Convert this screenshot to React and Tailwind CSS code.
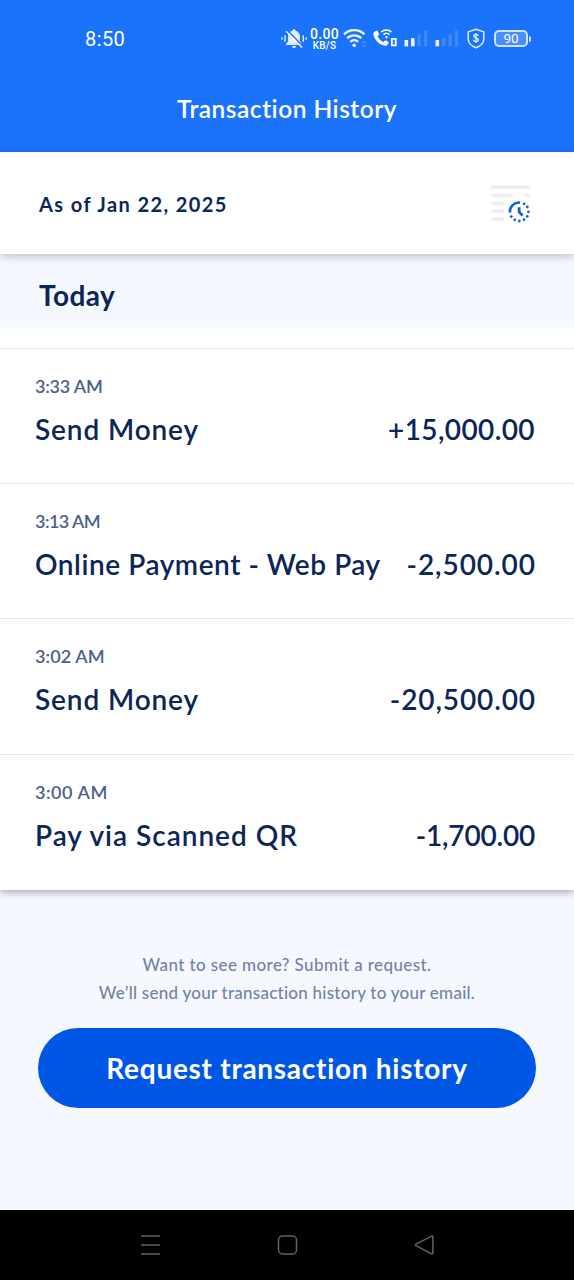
import React from "react";

const transactions = [
  { time: "3:33 AM", name: "Send Money", amount: "+15,000.00", nameTrack: "tracking-[0.880px]", amountTrack: "tracking-[0.400px]", timeTrack: "tracking-[-0.200px]" },
  { time: "3:13 AM", name: "Online Payment - Web Pay", amount: "-2,500.00", nameTrack: "tracking-[0.560px]", amountTrack: "tracking-[0.950px] -mr-px", timeTrack: "tracking-[-0.550px]" },
  { time: "3:02 AM", name: "Send Money", amount: "-20,500.00", nameTrack: "tracking-[0.880px]", amountTrack: "tracking-[0.900px] -mr-px", timeTrack: "tracking-[0.100px]" },
  { time: "3:00 AM", name: "Pay via Scanned QR", amount: "-1,700.00", nameTrack: "tracking-[0.980px]", amountTrack: "tracking-[-0.200px]", timeTrack: "tracking-[0.550px]" },
];

function BellOff() {
  return (
    <svg className="h-6 w-[27px] shrink-0" viewBox="0 0 27 24" fill="none">
      <path d="M14 2.200c-1 0-1.600.6-1.600 1.500C9.500 4.500 8.100 6.700 8.100 9.500v4.700L6.100 17v1h15.800v-1l-2-2.800V9.500c0-2.800-1.400-5-4.300-5.800 0-.9-.6-1.500-1.600-1.500zM12 19h4c0 1.200-.8 2-2 2s-2-.8-2-2z" fill="#fff" fillOpacity=".88" />
      <path d="M7.500 3.500l15.500 16" stroke="#1b73fc" strokeWidth="1.700" />
      <path d="M6.100 4.200l16 16.300" stroke="#fff" strokeOpacity=".9" strokeWidth="1.600" />
      <path d="M2 10.200v2.600M5 8.200v6.500M23.300 8.200v6.500M26.200 10.200v2.600" stroke="#fff" strokeOpacity=".88" strokeWidth="1.400" />
    </svg>
  );
}

function Wifi() {
  return (
    <svg className="ml-1 h-6 w-[24px] shrink-0" viewBox="0 0 24 24" fill="none">
      <g stroke="#fff" strokeOpacity=".92" strokeWidth="2.300">
        <path d="M1 7.300c5.800-5.500 14.700-5.500 20.500 0" />
        <path d="M4.200 11.200c4-3.800 10.100-3.800 14.100 0" />
        <path d="M7.400 14.800c2.200-2.100 5.500-2.100 7.700 0" />
      </g>
      <circle cx="11.200" cy="18.300" r="1.800" fill="#fff" fillOpacity=".95" />
      <path d="M19 15.300h4M19 18.700h4" stroke="#fff" strokeOpacity=".2" strokeWidth="1.500" />
    </svg>
  );
}

function WifiCall() {
  return (
    <svg className="ml-[6px] h-6 w-[25px] shrink-0" viewBox="0 0 25 24" fill="none">
      <path d="M1.200 5l2-1.300c.6-.3 1.200-.1 1.500.5L6 6.500c.3.600.1 1.100-.3 1.500L4.500 9c1 2.600 3.200 4.700 5.900 6l1.500-1.300c.5-.4 1-.4 1.500-.1l1.800 1.300c.6.400.6 1 .2 1.500l-1.200 1.600c-.7.900-1.600 1-2.800.7C6.200 17.700 1.400 13 .4 7.300c-.2-1 .1-1.800.8-2.300z" fill="#fff" />
      <path d="M8.300 5c2.900-2.800 7.200-2.800 10.100 0M10.500 7.600c1.800-1.700 4.100-1.700 5.900 0" stroke="#fff" strokeWidth="1.500" />
      <circle cx="13.500" cy="10" r="1.200" fill="#fff" />
      <rect x="18.800" y="11.900" width="4" height="6.500" stroke="#fff" strokeWidth="1.700" />
      <path d="M20.800 13.800v2.600" stroke="#fff" strokeOpacity=".5" strokeWidth=".8" />
    </svg>
  );
}

function Signal({ level }) {
  const on = (n) => (n <= level ? 0.92 : 0.16);
  return (
    <svg className="ml-[6px] h-6 w-[25px] shrink-0" viewBox="0 0 25 24" fill="#fff">
      <rect x="0.500" y="13" width="3.600" height="6.300" fillOpacity={on(1)} />
      <rect x="7" y="11" width="3.600" height="8.300" fillOpacity={on(2)} />
      <rect x="13.500" y="7.500" width="3.300" height="11.800" fillOpacity={on(3)} />
      <rect x="20" y="3.500" width="3.300" height="15.800" fillOpacity={on(4)} />
    </svg>
  );
}

function Shield() {
  return (
    <svg className="ml-[7px] h-6 w-[18px] shrink-0" viewBox="0 0 18 24" fill="none" stroke="#fff" strokeOpacity=".85">
      <path d="M9 2.200l7.800 2.700v7.400c0 3.900-3.400 6.700-7.800 8.500-4.400-1.800-7.800-4.600-7.800-8.500V4.900z" strokeWidth="1.500" strokeLinejoin="round" />
      <path d="M11.300 9c-.2-1-1-1.600-2.300-1.600s-2.300.7-2.300 1.700c0 2.500 4.700 1.200 4.700 3.700 0 1.100-1 1.800-2.400 1.800s-2.400-.7-2.500-1.800M9 6v10" strokeWidth="1.400" />
    </svg>
  );
}

function HistoryIcon() {
  return (
    <svg className="h-[40px] w-[42px]" viewBox="0 0 42 40" fill="none">
      <g fill="#eceef0">
        <rect x="1" y="0.500" width="39" height="3.600" rx=".8" />
        <rect x="1" y="8.700" width="21.500" height="3.500" rx=".8" />
        <path d="M33.500 8.700H38.500c1 0 1.500.7 1.500 1.800v2.500L34 10.200z" />
        <rect x="1" y="16.700" width="13" height="3.500" rx=".8" />
        <rect x="1" y="24.600" width="13" height="3.500" rx=".8" />
        <rect x="1" y="32.300" width="13" height="3.500" rx=".8" />
      </g>
      <path d="M19.900 27.500a9.300 9.300 0 0 1 10.200-10" stroke="#1160d6" strokeWidth="2.600" />
      <g fill="#1160d6">
        <circle cx="34.100" cy="18.800" r="1.400" />
        <circle cx="37.300" cy="22" r="1.400" />
        <circle cx="38.400" cy="26.800" r="1.400" />
        <circle cx="37.200" cy="31.400" r="1.400" />
        <circle cx="34" cy="34.700" r="1.400" />
        <circle cx="29.300" cy="36" r="1.400" />
        <circle cx="24.700" cy="34.800" r="1.400" />
        <circle cx="21.300" cy="31.600" r="1.400" />
      </g>
      <path d="M29.100 22.200v4.800l3.500 3.500" stroke="#1160d6" strokeWidth="2.800" />
    </svg>
  );
}

export default function App() {
  return (
    <div className="flex h-[1280px] w-[574px] flex-col overflow-hidden bg-[#f5f9ff] font-['Lato','Liberation_Sans',sans-serif] text-[#0c2659]">
      <header className="flex h-[152px] shrink-0 flex-col bg-[#1b73fc] text-white">
        <div className="flex h-[77px] items-center pr-[43px] pl-[85px]">
          <span className="mr-auto font-['Roboto',sans-serif] text-[20px] tracking-[0.400px]">8:50</span>
          <BellOff />
          <div className="ml-[3px] flex w-[29px] shrink-0 flex-col items-center font-['Roboto',sans-serif] font-medium">
            <span className="text-[14px] leading-[13px] tracking-[0.300px]">0.00</span>
            <span className="text-[10px] leading-[9px] tracking-[0.200px]">KB/S</span>
          </div>
          <Wifi />
          <WifiCall />
          <Signal level={2} />
          <Signal level={1} />
          <Shield />
          <div className="ml-[9px] flex shrink-0 items-center gap-px">
            <div className="flex h-[17px] w-[34px] items-center justify-center rounded-[5px] border-2 border-white/75 bg-white/20 font-['Roboto',sans-serif] text-[13.500px] leading-none">90</div>
            <div className="h-[6px] w-[2px] rounded-r bg-white/80" />
          </div>
        </div>
        <h1 className="text-center text-[24.500px] leading-[63px] font-semibold tracking-[0.500px]">Transaction History</h1>
      </header>

      <section className="z-10 flex h-[102px] shrink-0 items-center justify-between bg-white pr-[42px] pl-[39px] shadow-[0_2px_9px_rgba(0,0,0,0.25)]">
        <p className="pt-px text-[20px] font-bold tracking-[1.400px]">As of Jan 22, 2025</p>
        <div className="pt-[3px]">
          <HistoryIcon />
        </div>
      </section>

      <section className="z-[1] flex h-[73px] shrink-0 items-center bg-[#f5f9ff] pt-[9px] pl-[39px]">
        <h2 className="text-[28px] leading-[40px] font-bold tracking-[0.450px]">Today</h2>
      </section>

      <main className="h-[563px] shrink-0 bg-white shadow-[0_2px_8px_rgba(0,0,0,0.35)]">
        <div className="h-[21px] bg-linear-to-b from-[#fafcff] to-white to-50%" />
        {transactions.map((t) => (
          <div key={t.time} className="h-[135.200px] border-t border-[#e8ebed] pr-[39px] pl-[35px]">
            <div className={`pt-[24px] text-[18px] leading-[26px] font-semibold text-[#4c5f8c] ${t.timeTrack}`}>{t.time}</div>
            <div className="flex justify-between pt-[10px] text-[28px] leading-[40px] font-semibold whitespace-nowrap">
              <span className={t.nameTrack}>{t.name}</span>
              <span className={t.amountTrack}>{t.amount}</span>
            </div>
          </div>
        ))}
      </main>

      <footer className="flex grow flex-col px-[38px] pt-[61px]">
        <p className="text-center text-[17px] leading-[28px] font-medium whitespace-nowrap text-[#7482a7]">
          <span className="block tracking-[0.400px]">Want to see more? Submit a request.</span>
          <span className="block tracking-[0.250px]">We’ll send your transaction history to your email.</span>
        </p>
        <button className="mt-[21px] h-[80px] w-[498px] rounded-full bg-[#0057e5] text-[28px] font-bold tracking-[0.720px] text-white">Request transaction history</button>
      </footer>

      <nav className="flex h-[70px] shrink-0 items-center justify-between bg-black px-[139px]">
        <svg className="h-6 w-[22px]" viewBox="0 0 22 24" stroke="#626262" strokeWidth="1.500"><path d="M2 3h19M2 12h19M2 21h19" /></svg>
        <svg className="h-6 w-[22px]" viewBox="0 0 22 24" fill="none" stroke="#626262" strokeWidth="1.500"><rect x="2.500" y="3" width="18" height="18" rx="4" /></svg>
        <svg className="h-6 w-[22px]" viewBox="0 0 22 24" fill="none" stroke="#626262" strokeWidth="1.500" strokeLinejoin="round"><path d="M18.700 3.200L2.900 11.200c-.6.300-.6 1.200 0 1.500L18.700 20.800c.6.300 1.200 0 1.200-.7V3.900c0-.7-.6-1-1.200-.7z" /></svg>
      </nav>
    </div>
  );
}
